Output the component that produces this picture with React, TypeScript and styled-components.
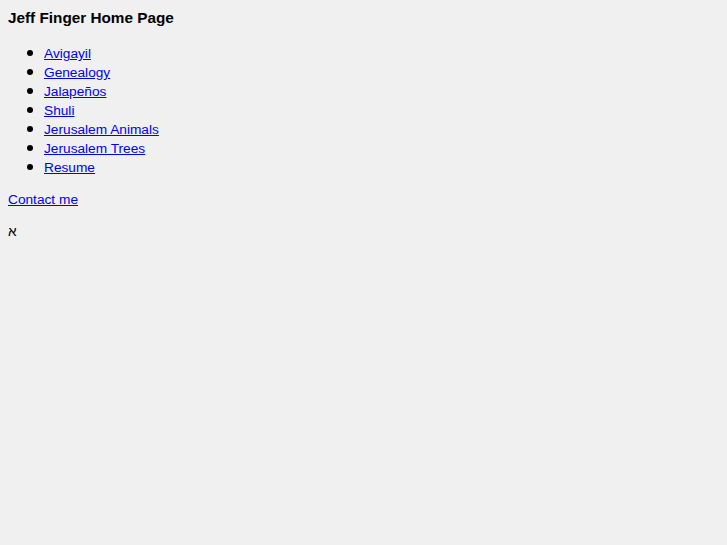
import React from "react";
import styled, { createGlobalStyle } from "styled-components";

const Global = createGlobalStyle`
  html, body { background: #f0f0f0; }
  body {
    margin: 8px;
    font-family: "Liberation Sans", Arial, sans-serif;
    font-size: 13.7px;
    line-height: 19px;
    color: #000;
  }
`;

const Title = styled.h1`
  font-size: 15.3px;
  font-weight: bold;
  margin: 0 0 17px;
  line-height: 19px;
`;

const List = styled.ul`
  margin: 0 0 13px;
  padding-left: 36px;
  list-style: none;
`;

const Item = styled.li`
  position: relative;
  line-height: 19px;
  &::before {
    content: "";
    position: absolute;
    left: -17px;
    top: 6px;
    width: 6px;
    height: 6px;
    border-radius: 50%;
    background: #000;
  }
`;

const Link = styled.a`
  color: #0000ee;
  text-decoration: underline;
`;

const Para = styled.p`
  margin: 0 0 13px;
`;

const links = [
  "Avigayil",
  "Genealogy",
  "Jalapeños",
  "Shuli",
  "Jerusalem Animals",
  "Jerusalem Trees",
  "Resume",
];

export default function App() {
  return (
    <>
      <Global />
      <Title>Jeff Finger Home Page</Title>
      <List>
        {links.map((l) => (
          <Item key={l}>
            <Link href="#">{l}</Link>
          </Item>
        ))}
      </List>
      <Para>
        <Link href="#">Contact me</Link>
      </Para>
      <Para>א</Para>
    </>
  );
}
